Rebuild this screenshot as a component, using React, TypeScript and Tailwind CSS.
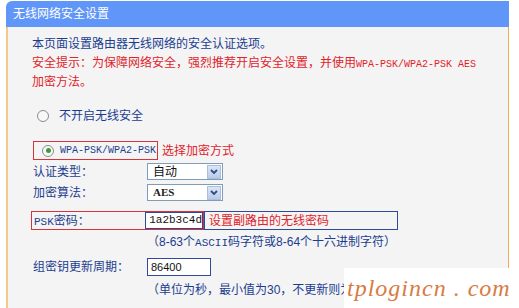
import React from 'react';

const navy = 'text-[#1b3d8f]';

const Radio = ({ checked }: { checked?: boolean }) => (
  <span className="flex h-[12px] w-[12px] items-center justify-center rounded-full border border-[#8c8c8c] bg-[#f8f8f8]">
    {checked && <span className="h-[5px] w-[5px] rounded-full bg-[#3f9a3f]" />}
  </span>
);

const Select = ({ value, mono }: { value: string; mono?: boolean }) => (
  <div className="flex h-[17px] w-[76px] items-center justify-between border border-[#7f9db9] bg-white pl-[5px] pr-px">
    <span
      className={
        mono
          ? "font-['Liberation_Serif',serif] text-[11px] font-bold text-[#222]"
          : 'text-[12px] text-[#111]'
      }
    >
      {value}
    </span>
    <span className="flex h-[14px] w-[14px] items-center justify-center border border-[#a9bfdc] bg-gradient-to-b from-[#dbe6f5] to-[#b9cce6]">
      <svg width="8" height="6" viewBox="0 0 8 6">
        <polyline points="1,1 4,4 7,1" fill="none" stroke="#2d4c8c" strokeWidth="1.8" />
      </svg>
    </span>
  </div>
);

export default function App() {
  return (
    <div className="relative h-[308px] w-[519px] overflow-hidden bg-white font-['Liberation_Sans','Noto_Sans_CJK_SC',sans-serif] text-[12px]">
      <div className="ml-[6px] flex h-full w-[503px] flex-col">
        {/* Header */}
        <div className="mt-px h-[26px] rounded-tl-[6px] bg-[#6196f9] pl-[7px] text-[12px] leading-[26px] text-white">
          无线网络安全设置
        </div>

        <div className="flex-1 border-l-2 border-r border-l-[#f3c98c] border-r-[#efaa55] bg-[#f4f4f4] pl-[24px] pt-[8px]">
          <div className={`h-[19px] leading-[19px] ${navy}`}>本页面设置路由器无线网络的安全认证选项。</div>
          <div className="h-[19px] whitespace-nowrap leading-[19px] text-[#e1232b]">
            安全提示：为保障网络安全，强烈推荐开启安全设置，并使用
            <span className="font-['Liberation_Mono',monospace] text-[10px]">WPA-PSK/WPA2-PSK AES</span>
          </div>
          <div className="h-[19px] leading-[19px] text-[#e1232b]">加密方法。</div>

          {/* Radio: off */}
          <div className="mt-[15px] flex h-[18px] items-center pl-[5px]">
            <Radio />
            <span className={`ml-[10px] ${navy}`}>不开启无线安全</span>
          </div>

          {/* Radio: WPA */}
          <div className="mt-[16px] flex h-[19px] items-center">
            <div className="ml-px flex h-[19px] w-[125px] items-center border border-[#d8333a] pl-[8px]">
              <Radio checked />
              <span className="ml-[6px] font-['Liberation_Mono',monospace] text-[10px] text-[#1b3d8f]">
                WPA-PSK/WPA2-PSK
              </span>
            </div>
            <span className="ml-[4px] text-[#e1232b]">选择加密方式</span>
          </div>

          <div className="mt-[3px] flex h-[17px] items-center">
            <span className={`w-[115px] pl-px ${navy}`}>认证类型：</span>
            <Select value="自动" />
          </div>
          <div className="mt-[4px] flex h-[17px] items-center">
            <span className={`w-[115px] pl-px ${navy}`}>加密算法：</span>
            <Select value="AES" mono />
          </div>

          {/* PSK */}
          <div className="-ml-px mt-[10px] flex h-[19px] items-stretch">
            <div className="flex w-[173px] items-center border border-[#d8333a]">
              <span className={`w-[114px] pl-[2px] font-['Liberation_Mono',monospace] text-[11px] ${navy}`}>
                PSK<span className="font-['Noto_Sans_CJK_SC',sans-serif] text-[12px]">密码：</span>
              </span>
              <div className="flex h-[17px] flex-1 items-center border border-[#2f4a9a] bg-white pl-[3px] font-['Liberation_Mono',monospace] text-[11px] text-[#111]">
                1a2b3c4d
              </div>
            </div>
            <div className="flex w-[194px] items-center border border-[#2f4a9a] bg-[#f4f4f4] pl-[4px] text-[#e1232b]">
              设置副路由的无线密码
            </div>
          </div>

          <div className={`ml-[115px] mt-[2px] h-[20px] leading-[20px] ${navy}`}>
            （8-63个<span className="font-['Liberation_Mono',monospace] text-[11px]">ASCII</span>码字符或8-64个十六进制字符）
          </div>

          <div className="mt-[6px] flex h-[18px] items-center">
            <span className={`w-[115px] pl-px ${navy}`}>组密钥更新周期：</span>
            <div className="flex h-[18px] w-[64px] items-center border border-[#2f4a9a] bg-white pl-[3px] text-[11px] text-[#111]">
              86400
            </div>
          </div>

          <div className={`ml-[115px] mt-[4px] h-[20px] whitespace-nowrap leading-[20px] ${navy}`}>
            （单位为秒，最小值为30，不更新则为0）
          </div>
        </div>
      </div>

      {/* Watermark */}
      <div className="absolute bottom-0 right-0 flex h-[40px] w-[175px] items-center bg-white pl-[3px]">
        <span className="whitespace-nowrap font-['Liberation_Serif',serif] text-[24px] italic leading-none tracking-[1px] text-[#d97a42]">
          tplogincn . com
        </span>
      </div>
    </div>
  );
}
